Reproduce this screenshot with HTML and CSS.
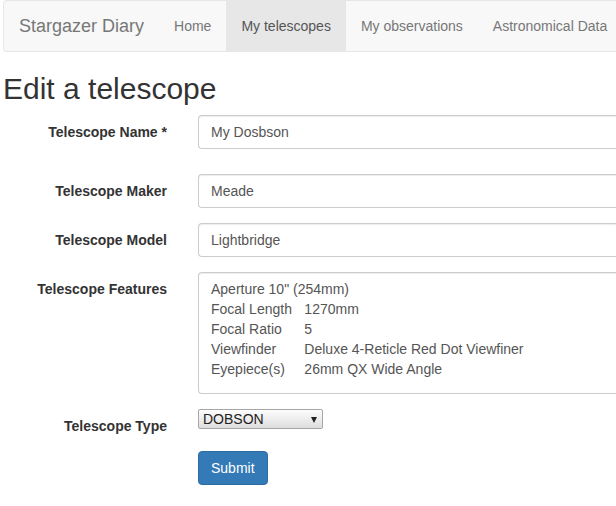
FILE: index.html
```html
<!DOCTYPE html>
<html>
<head>
<meta charset="utf-8">
<title>Edit a telescope</title>
<link rel="stylesheet" href="styles.css">
</head>
<body>
<div class="page">
  <nav class="navbar">
    <a class="brand" href="#">Stargazer Diary</a>
    <ul class="nav">
      <li><a href="#">Home</a></li>
      <li class="active"><a href="#">My telescopes</a></li>
      <li><a href="#">My observations</a></li>
      <li><a href="#">Astronomical Data</a></li>
    </ul>
  </nav>
  <h2 class="title">Edit a telescope</h2>
  <form class="form">
    <div class="group group-first">
      <label class="label">Telescope Name *</label>
      <div class="field"><input class="control" type="text" value="My Dosbson"></div>
    </div>
    <div class="group">
      <label class="label">Telescope Maker</label>
      <div class="field"><input class="control" type="text" value="Meade"></div>
    </div>
    <div class="group">
      <label class="label">Telescope Model</label>
      <div class="field"><input class="control" type="text" value="Lightbridge"></div>
    </div>
    <div class="group">
      <label class="label">Telescope Features</label>
      <div class="field"><textarea class="control area">Aperture 10" (254mm)
Focal Length&#9;1270mm
Focal Ratio&#9;5
Viewfinder&#9;Deluxe 4-Reticle Red Dot Viewfiner
Eyepiece(s)&#9;26mm QX Wide Angle</textarea></div>
    </div>
    <div class="group">
      <label class="label">Telescope Type</label>
      <div class="field"><span class="select-wrap"><select class="select"><option>DOBSON</option></select></span></div>
    </div>
    <div class="group">
      <div></div>
      <div class="field"><button class="btn" type="button">Submit</button></div>
    </div>
  </form>
</div>
</body>
</html>
```
FILE: styles.css
```css
html {
  overflow: hidden;
}
body {
  margin: 0;
  font-family: "Liberation Sans", Arial, sans-serif;
  font-size: 14px;
  line-height: 20px;
  color: #333;
  background: #fff;
}
.page {
  width: 613px;
  padding-left: 3px;
  overflow: hidden;
}
.navbar {
  display: flex;
  align-items: stretch;
  height: 50px;
  background: #f8f8f8;
  border: 1px solid #e7e7e7;
  border-right: none;
  border-radius: 4px 0 0 4px;
  margin-bottom: 20px;
  overflow: hidden;
}
.brand {
  padding: 15px;
  font-size: 18px;
  line-height: 20px;
  color: #777;
  text-decoration: none;
  flex: none;
}
.nav {
  display: flex;
  list-style: none;
  margin: 0;
  padding: 0;
  flex: none;
}
.nav a {
  display: block;
  padding: 15px;
  line-height: 20px;
  color: #777;
  text-decoration: none;
  white-space: nowrap;
}
.nav .active a {
  background: #e7e7e7;
  color: #555;
}
.title {
  font-size: 30px;
  font-weight: normal;
  line-height: 33px;
  margin: 20px 0 10px;
  color: #333;
}
.form {
  display: flex;
  flex-direction: column;
}
.group {
  display: grid;
  grid-template-columns: 164px 1fr;
  column-gap: 31px;
  margin-bottom: 15px;
  align-items: start;
}
.group-first {
  margin-bottom: 25px;
}
.label {
  text-align: right;
  font-weight: bold;
  padding-top: 7px;
  line-height: 20px;
}
.field {
  min-width: 0;
}
.control {
  display: block;
  box-sizing: border-box;
  width: 100%;
  height: 34px;
  padding: 6px 12px;
  font-family: "Liberation Sans", Arial, sans-serif;
  font-size: 14px;
  line-height: 20px;
  color: #555;
  background: #fff;
  border: 1px solid #ccc;
  border-right: none;
  border-radius: 4px 0 0 4px;
  box-shadow: inset 0 1px 1px rgba(0, 0, 0, 0.075);
  margin: 0;
}
.area {
  height: 122px;
  resize: none;
  tab-size: 8;
  overflow: hidden;
}
.select-wrap {
  position: relative;
  display: inline-block;
}
.select-wrap::after {
  content: "";
  position: absolute;
  right: 6px;
  top: 8px;
  border-left: 3.5px solid transparent;
  border-right: 3.5px solid transparent;
  border-top: 6px solid #222;
  pointer-events: none;
}
.select {
  appearance: none;
  -webkit-appearance: none;
  display: block;
  box-sizing: border-box;
  width: 125px;
  height: 20px;
  margin: 0;
  padding: 0 4px;
  font-family: "Liberation Sans", Arial, sans-serif;
  font-size: 14px;
  line-height: 18px;
  color: #222;
  border: 1px solid #a6a6a6;
  border-radius: 2px;
  background: linear-gradient(#fdfdfd, #dedede);
}
.btn {
  font-family: "Liberation Sans", Arial, sans-serif;
  font-size: 14px;
  line-height: 20px;
  padding: 6px 12px;
  color: #fff;
  background: #337ab7;
  border: 1px solid #2e6da4;
  border-radius: 4px;
  margin: 0;
}
```
